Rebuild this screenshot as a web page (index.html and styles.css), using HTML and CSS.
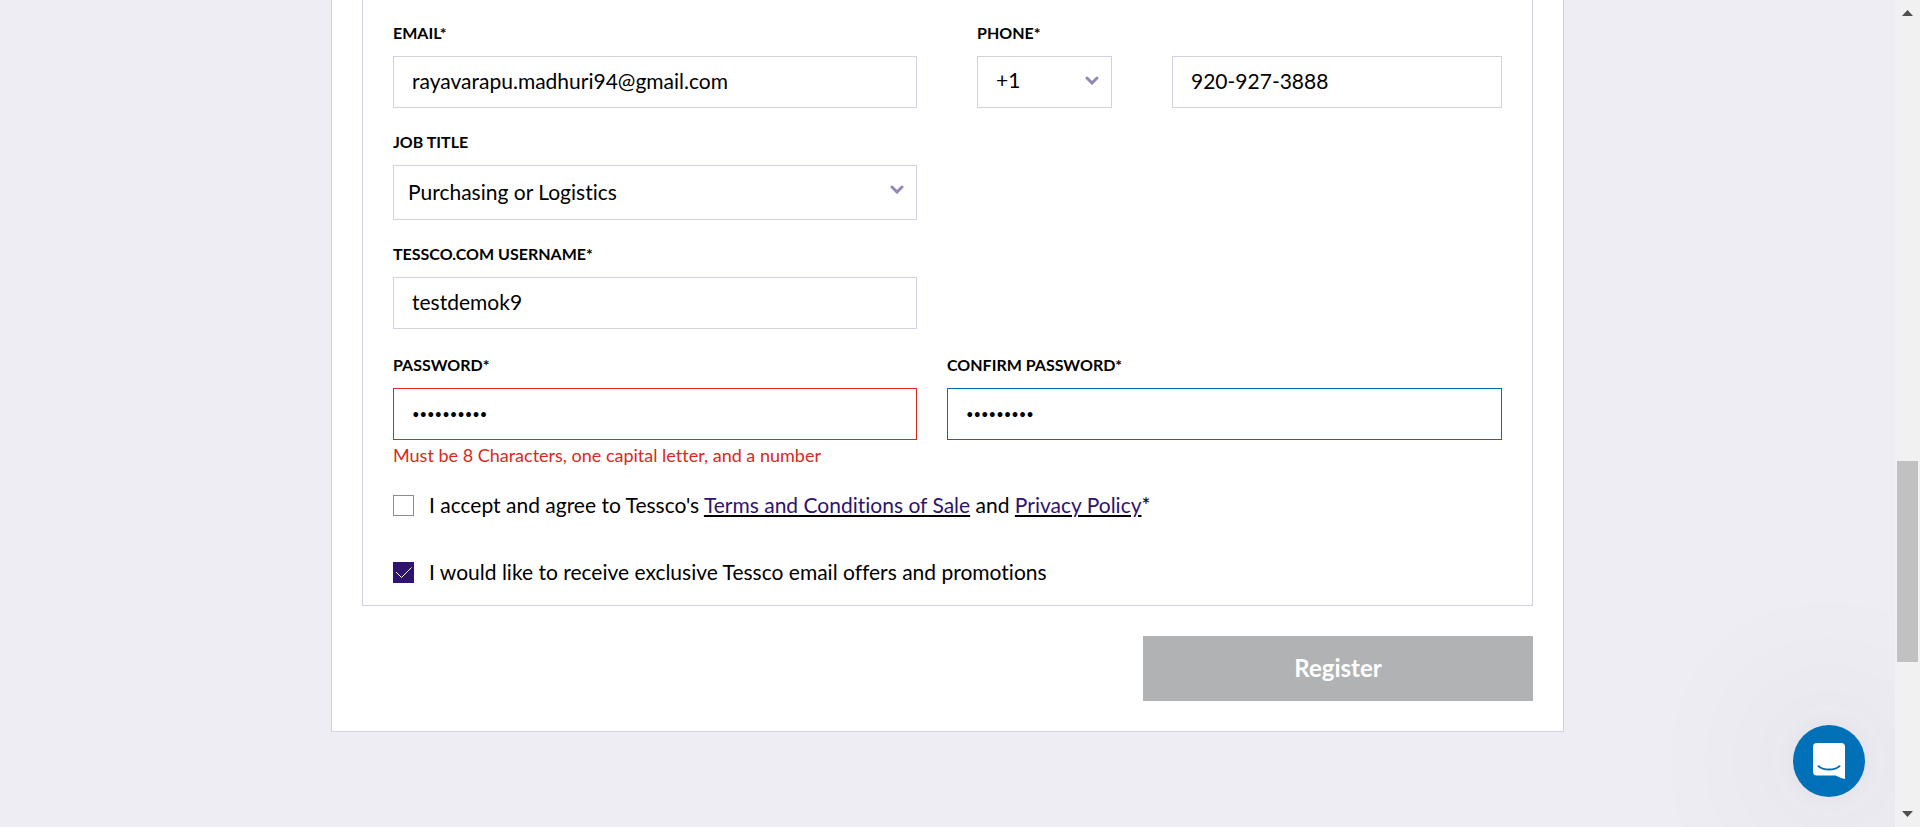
FILE: index.html
```html
<!DOCTYPE html>
<html lang="en">
<head>
<meta charset="utf-8">
<title>Register</title>
<link rel="stylesheet" href="styles.css">
</head>
<body>
<div class="viewport">
  <main class="page">
    <form class="card">
      <div class="panel">
        <div class="rows">
          <div class="row">
            <div class="field">
              <label class="label" for="email">EMAIL*</label>
              <input class="input" id="email" type="text" value="rayavarapu.madhuri94@gmail.com">
            </div>
            <div class="field field-phone">
              <label class="label" for="phone">PHONE*</label>
              <div class="phone">
                <span class="select-wrap">
                  <select class="input select" aria-label="Country code"><option>+1</option></select>
                  <svg class="chevron" viewBox="0 0 14 9"><path d="M2 2l5 5 5-5"/></svg>
                </span>
                <input class="input" id="phone" type="tel" value="920-927-3888">
              </div>
            </div>
          </div>
          <div class="row">
            <div class="field">
              <label class="label" for="job">JOB TITLE</label>
              <span class="select-wrap">
                <select class="input select select-job" id="job"><option>Purchasing or Logistics</option></select>
                <svg class="chevron" viewBox="0 0 14 9"><path d="M2 2l5 5 5-5"/></svg>
              </span>
            </div>
          </div>
          <div class="row">
            <div class="field">
              <label class="label" for="user">TESSCO.COM USERNAME*</label>
              <input class="input" id="user" type="text" value="testdemok9">
            </div>
          </div>
        </div>
        <div class="row row-password">
          <div class="field">
            <label class="label" for="pass">PASSWORD*</label>
            <input class="input input-password input-error" id="pass" type="password" value="Password12" aria-describedby="pass-error">
            <p class="error" id="pass-error">Must be 8 Characters, one capital letter, and a number</p>
          </div>
          <div class="field field-confirm">
            <label class="label" for="confirm">CONFIRM PASSWORD*</label>
            <input class="input input-password input-active" id="confirm" type="password" value="Password1">
          </div>
        </div>
        <div class="checks">
          <div class="check">
            <input class="box" id="terms" type="checkbox">
            <label for="terms">I accept and agree to Tessco's <a class="link" href="#terms"><span class="link-text">Terms and Conditions of Sale</span></a> and <a class="link" href="#privacy"><span class="link-text">Privacy Policy</span></a>*</label>
          </div>
          <div class="check">
            <span class="box-wrap">
              <input class="box" id="offers" type="checkbox" checked>
              <svg class="tick" viewBox="0 0 21 21"><path d="M3 10l5.500 5.500L18.500 5.500"/></svg>
            </span>
            <label for="offers">I would like to receive exclusive Tessco email offers and promotions</label>
          </div>
        </div>
      </div>
      <button class="register" type="submit">Register</button>
    </form>
  </main>
  <button class="chat" type="button" aria-label="Open chat">
    <svg class="chat-icon" viewBox="0 0 32 36"><path fill="#fff" d="M4 0h24a4 4 0 0 1 4 4v32s-5-1-9.500-3.500H4a4 4 0 0 1-4-4V4a4 4 0 0 1 4-4z"/><path class="smile" d="M5.500 23.200c6 4.500 15 4.500 21 0"/></svg>
  </button>
  <aside class="scrollbar" aria-hidden="true">
    <svg class="arrow" viewBox="0 0 11 6"><path d="M0 6h11L5.500 0z"/></svg>
    <div class="thumb"></div>
    <svg class="arrow" viewBox="0 0 11 6"><path d="M0 0h11L5.500 6z"/></svg>
  </aside>
</div>
</body>
</html>
```
FILE: styles.css
```css
* { box-sizing: border-box; }

body {
  margin: 0;
  font-family: Lato, Roboto, sans-serif;
  font-size: 21px;
  font-variant-ligatures: none;
  line-height: 24px;
  color: #000;
  background: #eeedf3;
}

.viewport {
  display: flex;
  position: relative;
  min-height: 100vh;
  overflow: hidden;
}

.page {
  flex: 1;
  padding: 0 30px;
}

.card {
  display: flex;
  flex-direction: column;
  max-width: 1233px;
  margin: 0 auto;
  padding: 0 30px 30px;
  background: #fff;
  border: 1px solid #d2d0e3;
  border-top: 0;
}

.panel {
  padding: 24px 30px 21px;
  border: 1px solid #d2d0e3;
  border-top: 0;
}

.rows {
  display: grid;
  gap: 25px;
}

.row {
  display: grid;
  grid-template-columns: 524fr 555fr;
  column-gap: 30px;
}

.row-password { margin-top: 27px; }
.field { min-width: 0; }
.field-phone { padding-left: 30px; }

.label {
  display: block;
  margin-bottom: 14px;
  font-size: 16px;
  font-weight: 700;
  line-height: 18px;
}

.input {
  display: block;
  width: 100%;
  height: 52px;
  padding: 0 18px 4px;
  font: inherit;
  color: #000;
  background: #fff;
  border: 1px solid #d2d0e3;
  border-radius: 0;
  outline: 0;
}

.input-password {
  padding-bottom: 0;
  font-size: 13px;
}

.input-error { border-color: #d9291c; }
.input-active { border-color: #006fb4; }

.phone {
  display: grid;
  grid-template-columns: 135fr 330fr;
  column-gap: 60px;
}

.select-wrap {
  display: block;
  position: relative;
}

.select { appearance: none; }

.select-job {
  height: 55px;
  padding: 0 14px 2px;
}

.chevron {
  position: absolute;
  top: 20px;
  right: 13px;
  width: 14px;
  height: 9px;
  fill: none;
  stroke: #9487b8;
  stroke-width: 3;
  stroke-linecap: round;
  pointer-events: none;
}

.error {
  margin: 4px 0 0;
  font-size: 18px;
  line-height: 22px;
  color: #d9291c;
}

.checks {
  display: grid;
  gap: 43px;
  margin-top: 27px;
}

.check {
  display: flex;
  align-items: center;
  gap: 15px;
}

.box-wrap {
  display: flex;
  position: relative;
}

.box {
  appearance: none;
  width: 21px;
  height: 21px;
  margin: 0;
  background: #fff;
  border: 1px solid #8c8c8c;
}

.box:checked {
  background: #2e1370;
  border-color: #2e1370;
}

.tick {
  position: absolute;
  inset: 0;
  fill: none;
  stroke: #fff;
  stroke-width: 1;
  pointer-events: none;
}

.link {
  color: #000;
  text-decoration: underline;
  text-decoration-thickness: 2px;
  text-underline-offset: 2px;
}

.link-text { color: #2e1370; }

.register {
  align-self: flex-end;
  width: 390px;
  max-width: 100%;
  height: 65px;
  margin-top: 30px;
  padding: 0 0 2px;
  font: inherit;
  font-size: 24px;
  font-weight: 700;
  color: #fff;
  background: #b1b2b4;
  border: 0;
}

.chat {
  display: flex;
  position: absolute;
  right: 55px;
  bottom: 30px;
  align-items: center;
  justify-content: center;
  width: 72px;
  height: 72px;
  padding: 0;
  background: #0071b8;
  border: 0;
  border-radius: 50%;
  box-shadow: 0 0 24px rgba(60, 20, 60, 0.05), 0 0 160px 30px rgba(60, 50, 80, 0.07);
}

.chat-icon {
  width: 32px;
  height: 36px;
}

.smile {
  fill: none;
  stroke: #0071b8;
  stroke-width: 2;
  stroke-linecap: round;
}

.scrollbar {
  display: flex;
  position: relative;
  flex-direction: column;
  align-items: center;
  width: 25px;
  padding: 10px 2px;
  background: #f1f1f1;
}

.thumb {
  width: 100%;
  height: 201px;
  margin: auto 0 149px;
  background: #c1c1c1;
}

.arrow {
  width: 11px;
  height: 6px;
  fill: #505050;
}
```
